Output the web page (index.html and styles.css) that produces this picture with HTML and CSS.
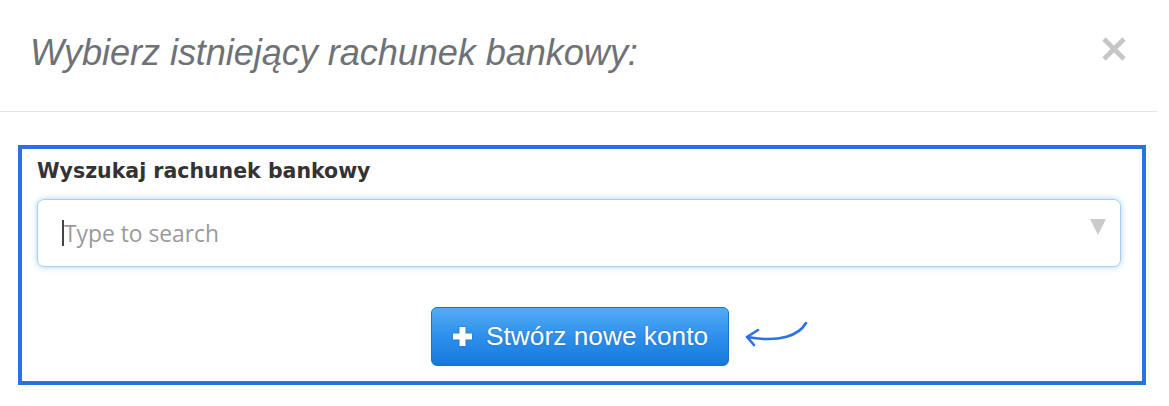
FILE: index.html
```html
<!DOCTYPE html>
<html lang="pl">
<head>
<meta charset="utf-8">
<title>Wybierz rachunek</title>
<link rel="stylesheet" href="styles.css">
</head>
<body>
<div class="modal">
  <div class="modal-header">
    <h4 class="modal-title">Wybierz istniejący rachunek bankowy:</h4>
    <button class="close" aria-label="Zamknij">
      <svg width="24" height="24" viewBox="0 0 24 24"><path d="M2 2 L22 22 M22 2 L2 22" stroke="#c6c6c6" stroke-width="4.6" stroke-linecap="butt"/></svg>
    </button>
  </div>
  <div class="modal-body">
    <div class="highlight">
      <label class="field-label">Wyszukaj rachunek bankowy</label>
      <div class="select-box">
        <span class="caret-line"></span>
        <span class="placeholder">Type to search</span>
        <span class="dropdown-arrow"></span>
      </div>
      <div class="actions">
        <div class="btn-wrap">
          <button class="btn-primary">
            <svg class="plus" width="19" height="19" viewBox="0 0 19 19"><path d="M6.5 0h6v6.5H19v6h-6.5V19h-6v-6.5H0v-6h6.5z" fill="#fff"/></svg>
            <span>Stwórz nowe konto</span>
          </button>
          <svg class="annot-arrow" width="70" height="30" viewBox="0 0 70 30"><path d="M65 2 C58 14 40 22 6 16 M6 16 L17 9 M6 16 L13 24" fill="none" stroke="#2a70e6" stroke-width="2.6" stroke-linecap="round" stroke-linejoin="round"/></svg>
        </div>
      </div>
    </div>
  </div>
</div>
</body>
</html>
```

FILE: styles.css
```css
html, body {
  margin: 0;
  padding: 0;
  background: #fff;
}
.modal {
  width: 1157px;
  font-family: "Liberation Sans", Arial, sans-serif;
}
.modal-header {
  height: 111px;
  border-bottom: 1px solid #e5e5e5;
  display: flex;
  align-items: center;
  justify-content: space-between;
  padding: 0 31px 0 30px;
  box-sizing: content-box;
}
.modal-title {
  margin: 0;
  font-style: italic;
  font-weight: normal;
  font-size: 36.2px;
  letter-spacing: -0.1px;
  color: #6e7277;
  line-height: 1;
  padding-bottom: 4px;
}
.close {
  border: 0;
  background: transparent;
  padding: 0;
  width: 24px;
  height: 24px;
  margin-bottom: 13px;
  display: block;
}
.close svg { display: block; }
.modal-body {
  padding: 33px 11px 0 18px;
}
.highlight {
  border: 4px solid #2872e7;
  height: 224px;
  padding: 8px 21px 0 15px;
}
.field-label {
  display: block;
  font-family: "DejaVu Sans", Verdana, sans-serif;
  font-weight: 700;
  font-size: 20.5px;
  line-height: 28px;
  color: #333;
  margin-bottom: 14px;
}
.select-box {
  height: 66px;
  border: 1px solid #a6cff0;
  border-radius: 7px;
  box-shadow: 0 0 6px rgba(102, 175, 233, 0.55);
  display: flex;
  align-items: center;
  padding: 0 14px 0 24px;
  position: relative;
}
.caret-line {
  width: 2px;
  height: 26px;
  background: #444;
}
.placeholder {
  flex: 1;
  font-family: "Open Sans", sans-serif;
  font-size: 22.8px;
  color: #9a9a9a;
  margin-top: 1px;
}
.dropdown-arrow {
  width: 0;
  height: 0;
  border-left: 8.5px solid transparent;
  border-right: 8.5px solid transparent;
  border-top: 16px solid #cbcbcb;
  margin-bottom: 12px;
}
.actions {
  display: flex;
  justify-content: center;
  margin-top: 40px;
}
.btn-wrap {
  position: relative;
  margin-left: 2px;
}
.btn-primary {
  display: flex;
  align-items: center;
  gap: 14px;
  width: 298px;
  height: 59px;
  padding: 0 0 0 21px;
  border: 1px solid #1c72cf;
  border-radius: 6px;
  background: linear-gradient(to bottom, #52acf6 0%, #2e90ec 50%, #1479dc 100%);
  color: #fff;
  font-family: "Liberation Sans", Arial, sans-serif;
  font-size: 26.3px;
  text-shadow: 0 0 2px rgba(0, 0, 0, 0.25);
  box-sizing: border-box;
}
.plus {
  filter: drop-shadow(0 0 1px rgba(0,0,0,0.3));
  flex: none;
}
.annot-arrow {
  position: absolute;
  left: calc(100% + 12px);
  top: 14px;
}
```
